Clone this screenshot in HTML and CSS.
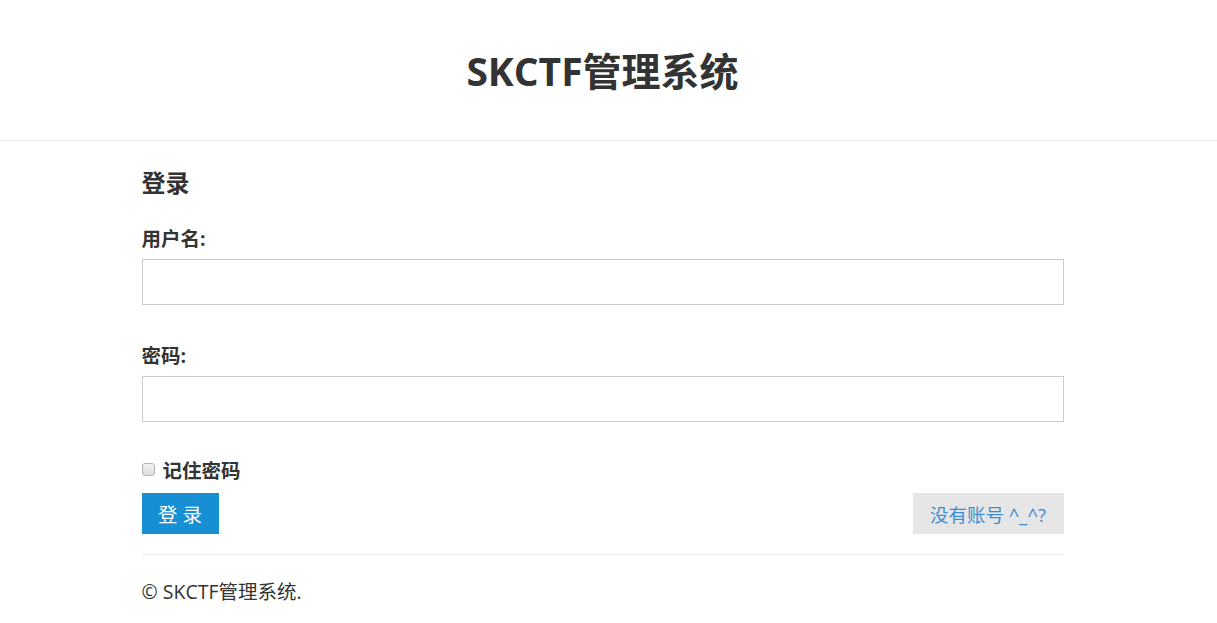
FILE: index.html
```html
<!DOCTYPE html>
<html lang="zh-CN">
<head>
<meta charset="utf-8">
<title>SKCTF管理系统</title>
<link rel="stylesheet" href="styles.css">
</head>
<body>
<header class="site-header">
  <h1 class="site-title">SKCTF管理系统</h1>
</header>
<main class="container">
  <h3 class="form-title">登录</h3>
  <form class="login-form">
    <div class="field">
      <label class="field-label" for="user">用户名:</label>
      <input class="field-input" id="user" type="text">
    </div>
    <div class="field">
      <label class="field-label" for="pass">密码:</label>
      <input class="field-input" id="pass" type="password">
    </div>
    <label class="remember"><input type="checkbox" class="remember-box"> 记住密码</label>
    <div class="actions">
      <button type="button" class="btn btn-primary">登 录</button>
      <button type="button" class="btn btn-link">没有账号 ^_^?</button>
    </div>
  </form>
  <hr class="divider">
  <footer class="footer">© SKCTF管理系统.</footer>
</main>
</body>
</html>
```

FILE: styles.css
```css
* { box-sizing: border-box; }
html, body { margin: 0; padding: 0; background: #fff; }
body {
  font-family: "Open Sans", "Noto Sans CJK SC", sans-serif;
  color: #333;
  padding-right: 12px;
}
.site-header {
  height: 141px;
  border-bottom: 1px solid #eee;
  margin-right: -12px;
  padding-right: 12px;
  display: flex;
  align-items: center;
  justify-content: center;
}
.site-title {
  margin: 0;
  font-size: 39px;
  font-weight: 700;
  line-height: 1;
}
.container {
  width: 922px;
  margin: 0 auto;
  padding-top: 26px;
}
.form-title {
  margin: 0;
  font-size: 24px;
  line-height: 32px;
  font-weight: 700;
}
.login-form { margin-top: 27px; }
.field { margin-bottom: 38px; }
.field-label {
  display: block;
  font-size: 19.5px;
  font-weight: 700;
  line-height: 26px;
  margin-bottom: 7px;
}
.field-input {
  display: block;
  width: 100%;
  height: 46px;
  border: 1px solid #ccc;
  border-radius: 0;
  background: #fff;
  font-size: 18px;
  padding: 6px 12px;
}
.remember {
  display: flex;
  align-items: center;
  gap: 8px;
  font-size: 19.5px;
  font-weight: 700;
  line-height: 26px;
  margin-top: -2px;
}
.remember-box {
  appearance: none;
  -webkit-appearance: none;
  margin: 0;
  width: 13px;
  height: 13px;
  border: 1px solid #b4b4b4;
  border-radius: 3px;
  background: linear-gradient(#f2f2f2, #dcdcdc);
  position: relative;
  top: -2px;
}
.actions {
  display: flex;
  justify-content: space-between;
  margin-top: 9px;
}
.btn {
  border: 0;
  border-radius: 0;
  height: 41px;
  padding: 0;
  font-family: "Open Sans", "Noto Sans CJK SC", sans-serif;
  font-size: 19.5px;
  cursor: pointer;
}
.btn-primary {
  width: 77px;
  background: #168fd5;
  color: #fff;
}
.btn-link {
  width: 151px;
  background: #e6e6e6;
  color: #3a8ed1;
  font-size: 18.5px;
}
.divider {
  border: 0;
  border-top: 1px solid #eee;
  margin: 20px 0 0;
}
.footer {
  font-size: 19.5px;
  line-height: 26px;
  padding-top: 24px;
}
```
